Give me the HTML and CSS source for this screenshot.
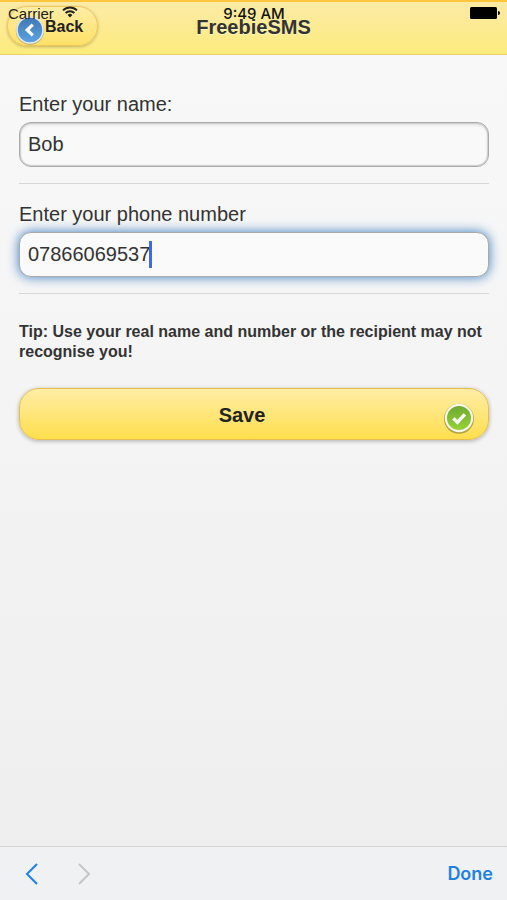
FILE: index.html
```html
<!DOCTYPE html>
<html lang="en">
<head>
<meta charset="utf-8">
<meta name="viewport" content="width=device-width, initial-scale=1">
<title>FreebieSMS</title>
<link rel="stylesheet" href="styles.css">
</head>
<body>
<div class="status">
  <span class="carrier">Carrier
    <svg class="wifi" viewBox="0 0 16 12" aria-hidden="true">
      <path d="M1 4.4a10 10 0 0 1 14 0M3.6 7a6.3 6.3 0 0 1 8.8 0" fill="none" stroke="currentColor" stroke-width="1.9"/>
      <path d="M8 11.6 5.6 9a3.4 3.4 0 0 1 4.8 0z" fill="currentColor"/>
    </svg>
  </span>
  <span class="clock">9:49 AM</span>
  <svg class="battery" viewBox="0 0 30 12" aria-hidden="true">
    <rect width="27" height="12" rx="1.5"/>
    <path d="M28 4a2 2 0 0 1 0 4z"/>
  </svg>
</div>
<header class="header">
  <button class="back" type="button">
    <svg class="back-icon" viewBox="0 0 30 30" aria-hidden="true">
      <defs>
        <linearGradient id="blue" x1="0" y1="0" x2="0" y2="1">
          <stop offset="0" stop-color="#3f78b4"/><stop offset="1" stop-color="#5ca3e2"/>
        </linearGradient>
      </defs>
      <circle cx="15" cy="15.8" r="14.2" fill="#9b9883" opacity=".6"/>
      <circle cx="15" cy="15" r="13.8" fill="#e6eaea"/>
      <circle cx="15" cy="15" r="12.2" fill="url(#blue)"/>
      <path d="m17.8 9.6-5.6 5.4 5.6 5.4" fill="none" stroke="#fff" stroke-width="3.2"/>
    </svg>
    <span>Back</span>
  </button>
  <h1 class="title">FreebieSMS</h1>
</header>
<main class="content">
  <form class="form">
    <div class="field">
      <label for="name">Enter your name:</label>
      <input class="input" id="name" type="text" value="Bob">
    </div>
    <div class="field">
      <label for="phone">Enter your phone number</label>
      <div class="input-wrap">
        <input class="input active" id="phone" type="tel" value="07866069537">
        <span class="caret-line" aria-hidden="true"><span class="typed">07866069537</span><span class="caret"></span></span>
      </div>
    </div>
    <p class="tip">Tip: Use your real name and number or the recipient may not recognise you!</p>
    <button class="save" type="button">
      <span>Save</span>
      <svg class="check" viewBox="0 0 32 32" aria-hidden="true">
        <defs>
          <linearGradient id="green" x1="0" y1="0" x2="0" y2="1">
            <stop offset="0" stop-color="#6eaa32"/><stop offset="1" stop-color="#96d336"/>
          </linearGradient>
        </defs>
        <circle cx="16" cy="16.8" r="15" fill="#8d7c3b" opacity=".65"/>
        <circle cx="16" cy="16" r="14.2" fill="#f6f6ea"/>
        <circle cx="16" cy="16" r="12" fill="url(#green)"/>
        <path d="m10.4 16.4 4 4 7.4-8" fill="none" stroke="#fff" stroke-width="3.4"/>
      </svg>
    </button>
  </form>
</main>
<footer class="toolbar">
  <button class="step" type="button" aria-label="Previous field"><svg viewBox="0 0 14 24" aria-hidden="true"><path d="M12 2 2 12l10 10"/></svg></button>
  <button class="step next" type="button" aria-label="Next field" disabled><svg viewBox="0 0 14 24" aria-hidden="true"><path d="m2 2 10 10L2 22"/></svg></button>
  <button class="done" type="button">Done</button>
</footer>
</body>
</html>
```
FILE: styles.css
```css
* {
  box-sizing: border-box;
}

body {
  margin: 0;
  min-height: 100vh;
  display: flex;
  flex-direction: column;
  background: linear-gradient(#f9f9f9, #eeeeee);
  color: #333;
  font-family: "Liberation Sans", Arial, sans-serif;
}

button {
  margin: 0;
  padding: 0;
  border: 0;
  background: none;
  font-family: inherit;
}

svg {
  display: block;
  flex-shrink: 0;
}

.status {
  position: absolute;
  z-index: 2;
  top: 6px;
  left: 8px;
  right: 7px;
  display: grid;
  grid-template-columns: 1fr auto 1fr;
  color: #222;
  font-size: 15px;
  line-height: 16px;
}

.carrier {
  display: flex;
  gap: 8px;
}

.wifi {
  width: 16px;
  height: 12px;
}

.clock {
  color: #111;
  font-family: Inter, "Liberation Sans", sans-serif;
  font-size: 15px;
  font-weight: 500;
}

.battery {
  width: 30px;
  height: 12px;
  margin-top: 1px;
  justify-self: end;
  fill: #000;
}

.header {
  display: grid;
  grid-template-columns: 1fr auto 1fr;
  align-items: start;
  height: 55px;
  padding: 4px 7px 0;
  border-top: 2px solid #fbc53c;
  border-bottom: 1px solid #edcf68;
  background: linear-gradient(#fceaa6, #fdec7d);
}

.back {
  display: flex;
  align-items: center;
  justify-self: start;
  height: 40px;
  padding: 4px 14px 0 7px;
  border: 1px solid #edc75a;
  border-radius: 20px;
  background: linear-gradient(#ffeda6, #ffe168);
  box-shadow: 0 1px 3px rgba(0, 0, 0, 0.25);
  color: #222;
  font-size: 16px;
  font-weight: bold;
  line-height: 20px;
}

.back span {
  padding-bottom: 2px;
}

.back-icon {
  width: 30px;
  height: 30px;
  margin-top: 4px;
}

.title {
  margin: 0;
  padding-top: 10px;
  font-size: 20px;
  line-height: 22px;
  text-shadow: 0 1px 0 #fff6c8;
}

.content {
  flex: 1;
  padding: 19px 18px 0 19px;
}

.field {
  padding: 18px 0 16px;
  border-bottom: 1px solid #d8d8d8;
}

.field label {
  display: block;
  margin-bottom: 6px;
  font-size: 20px;
  line-height: 24px;
}

.input {
  display: block;
  width: 100%;
  height: 45px;
  padding: 0 8px;
  border: 1px solid #aaa;
  border-radius: 12px;
  outline: 0;
  background: #f9f9f9;
  box-shadow: inset 0 0 1px 1px #ccc, inset 0 2px 3px rgba(0, 0, 0, 0.1);
  color: #333;
  font: 20px "Liberation Sans", Arial, sans-serif;
}

.input.active {
  background: #fafafa;
  box-shadow: 0 0 12px #387bbe;
}

.input-wrap {
  position: relative;
}

.caret-line {
  position: absolute;
  inset: 0 auto 0 8px;
  display: flex;
  align-items: center;
  font-size: 20px;
  pointer-events: none;
}

.typed {
  visibility: hidden;
}

.caret {
  width: 3px;
  height: 27px;
  background: #4169e1;
}

.tip {
  margin: 28px 0 26px;
  font-size: 16px;
  font-weight: bold;
  line-height: 20px;
}

.save {
  position: relative;
  display: block;
  width: 100%;
  height: 52px;
  padding: 2px 24px 0 0;
  border: 1px solid #e9bd4e;
  border-radius: 20px;
  background: linear-gradient(#ffeda6, #ffdf4d);
  box-shadow: 0 1px 4px rgba(0, 0, 0, 0.3);
  color: #222;
  font-size: 20px;
  font-weight: bold;
  line-height: 24px;
}

.check {
  position: absolute;
  top: 13px;
  right: 13px;
  width: 32px;
  height: 32px;
}

.toolbar {
  display: flex;
  align-items: center;
  gap: 38px;
  height: 54px;
  padding: 0 14px 0 25px;
  border-top: 1px solid #d4d5d5;
  background: #eff1f3;
}

.step svg {
  width: 14px;
  height: 24px;
  fill: none;
  stroke: #1f80e8;
  stroke-width: 2;
}

.step.next svg {
  stroke: #c4c5c7;
}

.done {
  margin-left: auto;
  color: #1f80e8;
  font-family: Inter, "Liberation Sans", sans-serif;
  font-size: 18px;
  font-weight: 600;
}
```
